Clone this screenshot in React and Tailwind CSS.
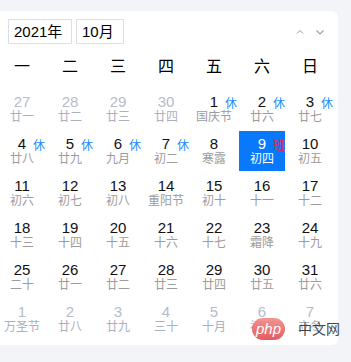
import React from "react";

// 2021年10月，周一开始
const rows = [
  [
    { d: 27, l: "廿一", o: true },
    { d: 28, l: "廿二", o: true },
    { d: 29, l: "廿三", o: true },
    { d: 30, l: "廿四", o: true },
    { d: 1, l: "国庆节", b: "休" },
    { d: 2, l: "廿六", b: "休" },
    { d: 3, l: "廿七", b: "休" },
  ],
  [
    { d: 4, l: "廿八", b: "休" },
    { d: 5, l: "廿九", b: "休" },
    { d: 6, l: "九月", b: "休" },
    { d: 7, l: "初二", b: "休" },
    { d: 8, l: "寒露" },
    { d: 9, l: "初四", b: "班", sel: true },
    { d: 10, l: "初五" },
  ],
  [
    { d: 11, l: "初六" },
    { d: 12, l: "初七" },
    { d: 13, l: "初八" },
    { d: 14, l: "重阳节" },
    { d: 15, l: "初十" },
    { d: 16, l: "十一" },
    { d: 17, l: "十二" },
  ],
  [
    { d: 18, l: "十三" },
    { d: 19, l: "十四" },
    { d: 20, l: "十五" },
    { d: 21, l: "十六" },
    { d: 22, l: "十七" },
    { d: 23, l: "霜降" },
    { d: 24, l: "十九" },
  ],
  [
    { d: 25, l: "二十" },
    { d: 26, l: "廿一" },
    { d: 27, l: "廿二" },
    { d: 28, l: "廿三" },
    { d: 29, l: "廿四" },
    { d: 30, l: "廿五" },
    { d: 31, l: "廿六" },
  ],
  [
    { d: 1, l: "万圣节", o: true },
    { d: 2, l: "廿八", o: true },
    { d: 3, l: "廿九", o: true },
    { d: 4, l: "三十", o: true },
    { d: 5, l: "十月", o: true },
    { d: 6, l: "初二", o: true },
    { d: 7, l: "立冬", o: true },
  ],
];

const weekNames = ["一", "二", "三", "四", "五", "六", "日"];

const font = { fontFamily: '"Liberation Sans", "Noto Sans CJK SC", sans-serif' };

function DayCell({ day }) {
  let numColor = "text-[#111]";
  let lunarColor = "text-[#9c9c9c]";
  if (day.o) {
    numColor = "text-[#b5bccb]";
    lunarColor = "text-[#a9b0bf]";
  }
  if (day.sel) {
    numColor = "text-white";
    lunarColor = "text-white";
  }
  return (
    <div
      className={`relative flex flex-col items-center h-[40px] pt-[5px] ${
        day.sel ? "bg-[#0a78fb]" : ""
      }`}
    >
      <span className={`text-[15px] leading-[16px] ${numColor}`}>{day.d}</span>
      <span className={`text-[12px] leading-[14px] whitespace-nowrap ${lunarColor}`}>{day.l}</span>
      {day.b && (
        <span
          className={`absolute right-0 top-[8px] text-[12px] leading-[14px] ${
            day.b === "班" ? "text-[#f5222d]" : "text-[#1a8cff]"
          }`}
        >
          {day.b}
        </span>
      )}
    </div>
  );
}

export default function App() {
  return (
    <div className="relative w-[351px] h-[362px] bg-[#f3f4f8] overflow-hidden" style={font}>
      {/* 顶部被截掉的标题 */}
      <div className="h-[11px] overflow-hidden pl-[40px]">
        <div className="text-[14px] leading-[14px] -mt-[16px] text-[#333]">日历组件 农历节假日示例</div>
      </div>

      <div className="w-[338px] bg-white rounded-r-md pt-2 pb-[6px]">
        <div className="flex items-center justify-between pl-2">
          <div className="flex gap-1">
            <div className="w-[64px] h-[25px] border border-[#dcdfe6] pl-[5px] text-[15px] leading-[23px] text-black">
              2021年
            </div>
            <div className="w-[48px] h-[25px] border border-[#dcdfe6] pl-[5px] text-[15px] leading-[23px] text-black">
              10月
            </div>
          </div>
          <div className="flex items-center gap-[10px] mr-[13px]">
            <svg width="10" height="10" viewBox="0 0 10 10" fill="none">
              <path d="M2 6.5 L5 3.5 L8 6.5" stroke="#9d94b4" strokeWidth="1" />
            </svg>
            <svg width="10" height="10" viewBox="0 0 10 10" fill="none">
              <path d="M1.5 3.5 L5 7 L8.5 3.5" stroke="#8fa3c2" strokeWidth="1.2" />
            </svg>
          </div>
        </div>

        <div className="mt-2 ml-[-1px] grid grid-cols-[repeat(7,46px)] gap-x-[2px] h-[30px] items-center">
          {weekNames.map((w) => (
            <div key={w} className="text-center text-[16px] leading-[30px] text-black">
              {w}
            </div>
          ))}
        </div>

        <div className="mt-[7px] ml-[-1px] grid grid-cols-[repeat(7,46px)] gap-[2px]">
          {rows.flat().map((day, i) => (
            <DayCell key={i} day={day} />
          ))}
        </div>
      </div>

      {/* 水印 */}
      <div className="absolute left-[252px] top-[318px] flex items-center gap-[13px] opacity-90">
        <div className="w-[33px] h-[22px] rounded-full bg-gradient-to-b from-[#f28a8a] to-[#e2484f] flex items-center justify-center">
          <span className="text-white italic text-[15px] leading-[15px] -mt-[2px]">php</span>
        </div>
        <span className="text-[#333] text-[14px] leading-[14px]">中文网</span>
      </div>
    </div>
  );
}
